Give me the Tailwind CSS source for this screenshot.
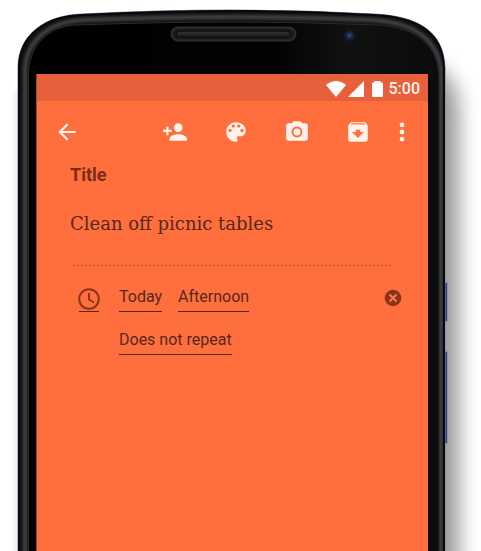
<!DOCTYPE html>
<html lang="en">
<head>
<meta charset="utf-8">
<meta name="viewport" content="width=device-width, initial-scale=1">
<title>Note reminder</title>
<script src="https://cdn.jsdelivr.net/npm/@tailwindcss/browser@4"></script>
</head>
<body class="bg-white font-[Roboto,sans-serif] text-[#55291c]">
<div class="relative isolate flex min-h-screen flex-col overflow-hidden pt-5 pr-[53px] pl-9">
  <!-- Phone body -->
  <svg class="absolute inset-0 -z-10 h-full w-full" viewBox="0 0 481 551" preserveAspectRatio="none" aria-hidden="true">
    <defs>
      <filter id="soft" x="-20%" y="-20%" width="140%" height="140%"><feGaussianBlur stdDeviation="10"/></filter>
      <filter id="faint" x="-20%" y="-20%" width="140%" height="140%"><feGaussianBlur stdDeviation="4"/></filter>
      <filter id="rim" x="-10%" y="-10%" width="120%" height="120%"><feGaussianBlur stdDeviation="1.6"/></filter>
      <linearGradient id="face" x1="0" x2="1" y1="0" y2="0">
        <stop offset="0" stop-color="#000"/><stop offset=".6" stop-color="#020202"/><stop offset=".78" stop-color="#101211"/><stop offset="1" stop-color="#0a0c0b"/>
      </linearGradient>
      <radialGradient id="lens"><stop offset="0" stop-color="#3b4a82"/><stop offset=".45" stop-color="#1d2648"/><stop offset="1" stop-color="#101318"/></radialGradient>
      <clipPath id="body"><path d="M18 580V68C18 34 46 15 82 14Q160 10 232 10T374 14C416 16 444 30 445 68V580Z"/></clipPath>
    </defs>
    <path d="M17 600V90H100V600Z" fill="#000" opacity=".14" filter="url(#faint)"/>
    <path d="M200 640V60H400C440 60 459 76 459 116V640Z" fill="#000" opacity=".4" filter="url(#soft)"/>
    <path d="M444 282h4v40h-4zM444 351h4v93h-4z" fill="#8791b8"/>
    <path d="M445 283h2v38h-2zM445 352h2v91h-2z" fill="#35407a"/>
    <path d="M18 580V68C18 34 46 15 82 14Q160 10 232 10T374 14C416 16 444 30 445 68V580Z" fill="#101010" stroke="#7c86ab"/>
    <g clip-path="url(#body)">
      <path d="M25 580V70C26 40 50 21 84 20Q160 17 232 17T374 20C412 23 437 37 441 70V580" fill="none" stroke="#444" stroke-width="4" filter="url(#rim)"/>
      <path d="M18 580V68C18 34 46 15 82 14Q160 10 232 10T374 14C416 16 444 30 445 68V580" fill="none" stroke="#07090f" stroke-width="4"/>
    </g>
    <path d="M28.500 580V74C29 46 48 26 76 25Q160 22 232 22T378 25C412 27 438 42 439 76V580Z" fill="url(#face)" stroke="#2b2b2b"/>
    <rect x="171.500" y="27.500" width="124" height="13" rx="6.500" fill="#1b1b1b" stroke="#2d2d2d" stroke-width="2"/>
    <rect x="176" y="31" width="115" height="6" rx="3" fill="#222" stroke="#0a0a0a"/>
    <path d="M179 33h109" stroke="#3c3c3c"/>
    <circle cx="349.500" cy="35.500" r="6" fill="url(#lens)"/>
  </svg>

  <main class="mt-[54px] flex grow flex-col border-l border-[#8f4a35] bg-[#ff6f3d]">
    <div class="flex h-[27px] items-center justify-end bg-[#e8603b] pt-[2px] pr-2 text-base font-medium text-[#fff3ec]">
      <svg class="mr-[2px] h-4 w-5" viewBox="0 0 20 16" fill="#fff" role="img" aria-label="Wi-Fi"><path d="M0 4Q10-4 20 4L10 16Z"/></svg>
      <svg class="mr-2 h-4 w-4" viewBox="0 0 16 16" fill="#fff" role="img" aria-label="Signal"><path d="M0 16L16 0V16Z"/></svg>
      <svg class="mr-[6px] h-4 w-[11px]" viewBox="0 0 11 16" fill="#fff" role="img" aria-label="Battery"><path d="M2.500 0h6v1.500H10q1 0 1 1V15q0 1-1 1H1q-1 0-1-1V2.500q0-1 1-1h1.500z"/></svg>
      <time>5:00</time>
    </div>

    <nav class="flex h-[61px] items-center pr-[13px] pl-[17px] text-[#fff3ec]" aria-label="Note actions">
      <button class="mr-auto" aria-label="Back"><svg class="size-[26px]" viewBox="0 0 24 24" fill="currentColor"><path d="M20 11H7.830l5.590-5.590L12 4l-8 8 8 8 1.410-1.410L7.830 13H20v-2z"/></svg></button>
      <div class="mr-[18px] flex gap-[35px]">
        <button aria-label="Add collaborator"><svg class="size-[26px]" viewBox="0 0 24 24" fill="currentColor"><path d="M15 12c2.210 0 4-1.790 4-4s-1.790-4-4-4-4 1.790-4 4 1.790 4 4 4zm-9-2V7H4v3H1v2h3v3h2v-3h3v-2H6zm9 4c-2.670 0-8 1.340-8 4v2h16v-2c0-2.660-5.330-4-8-4z"/></svg></button>
        <button aria-label="Colour"><svg class="size-[26px]" viewBox="0 0 24 24" fill="currentColor"><path d="M12 3c-4.970 0-9 4.030-9 9s4.030 9 9 9c.83 0 1.500-.67 1.500-1.500 0-.39-.15-.74-.39-1.010-.23-.26-.38-.61-.38-.99 0-.83.67-1.500 1.500-1.500H16c2.760 0 5-2.240 5-5 0-4.420-4.030-8-9-8zm-5.500 9c-.83 0-1.500-.67-1.500-1.500S5.670 9 6.500 9 8 9.670 8 10.500 7.330 12 6.500 12zm3-4C8.670 8 8 7.330 8 6.500S8.670 5 9.500 5s1.500.67 1.500 1.500S10.330 8 9.500 8zm5 0c-.83 0-1.500-.67-1.500-1.500S13.670 5 14.500 5s1.500.67 1.500 1.500S15.330 8 14.500 8zm3 4c-.83 0-1.500-.67-1.500-1.500S16.670 9 17.500 9s1.500.67 1.500 1.500-.67 1.500-1.500 1.500z"/></svg></button>
        <button aria-label="Add photo"><svg class="size-[26px]" viewBox="0 0 24 24" fill="currentColor"><circle cx="12" cy="12" r="3.200"/><path d="M9 2L7.170 4H4c-1.100 0-2 .9-2 2v12c0 1.100.9 2 2 2h16c1.100 0 2-.9 2-2V6c0-1.100-.9-2-2-2h-3.170L15 2H9zm3 15c-2.760 0-5-2.240-5-5s2.240-5 5-5 5 2.240 5 5-2.240 5-5 5z"/></svg></button>
        <button aria-label="Archive"><svg class="size-[26px]" viewBox="0 0 24 24" fill="currentColor"><path d="M20.540 5.230l-1.390-1.680C18.880 3.210 18.470 3 18 3H6c-.47 0-.88.21-1.160.55L3.460 5.230C3.170 5.570 3 6.020 3 6.500V19c0 1.100.9 2 2 2h14c1.100 0 2-.9 2-2V6.500c0-.48-.17-.93-.46-1.270zM12 17.500L6.500 12H10v-2h4v2h3.500L12 17.500zM5.120 5l.81-1h12l.94 1H5.120z"/></svg></button>
      </div>
      <button aria-label="More"><svg class="size-[26px]" viewBox="0 0 24 24" fill="currentColor"><circle cx="12" cy="5.500" r="2.200"/><circle cx="12" cy="12" r="2.200"/><circle cx="12" cy="18.500" r="2.200"/></svg></button>
    </nav>

    <article class="pt-px pr-[26px] pl-[33px]">
      <h1 class="text-lg leading-6 font-bold text-[#7a2c12]">Title</h1>
      <p class="mt-[25px] font-['DejaVu_Serif',serif] text-lg leading-6">Clean off picnic tables</p>
      <svg class="mt-7 ml-[3px] block h-[3px] w-[calc(100%-12px)]" aria-hidden="true"><path d="M0 1.500H2000" stroke="#c9532f" stroke-width="1.500" stroke-dasharray="2 2"/></svg>
      <div class="mt-5 flex items-start">
        <button class="mr-5 ml-[9px] h-[25px] w-5 border-b border-current" aria-label="Reminder"><svg class="-ml-px size-[22px]" viewBox="0 0 22 22" fill="none" stroke="#8a3519" stroke-width="2"><circle cx="11" cy="11" r="9.800"/><path d="M11 5v6.500l5 3"/></svg></button>
        <div class="flex grow flex-col items-start gap-[18px] text-base leading-5">
          <div class="flex gap-4">
            <button class="border-b border-current pb-1">Today</button>
            <button class="border-b border-current pb-1">Afternoon</button>
          </div>
          <button class="border-b border-current pb-1">Does not repeat</button>
        </div>
        <button class="mt-[2px]" aria-label="Remove reminder"><svg class="size-[18px]" viewBox="0 0 18 18"><circle cx="9" cy="9" r="8.300" fill="#8a3519"/><path d="M5.500 5.500l7 7M12.500 5.500l-7 7" stroke="#ff7a4b" stroke-width="1.800"/></svg></button>
      </div>
    </article>
  </main>
</div>
</body>
</html>
